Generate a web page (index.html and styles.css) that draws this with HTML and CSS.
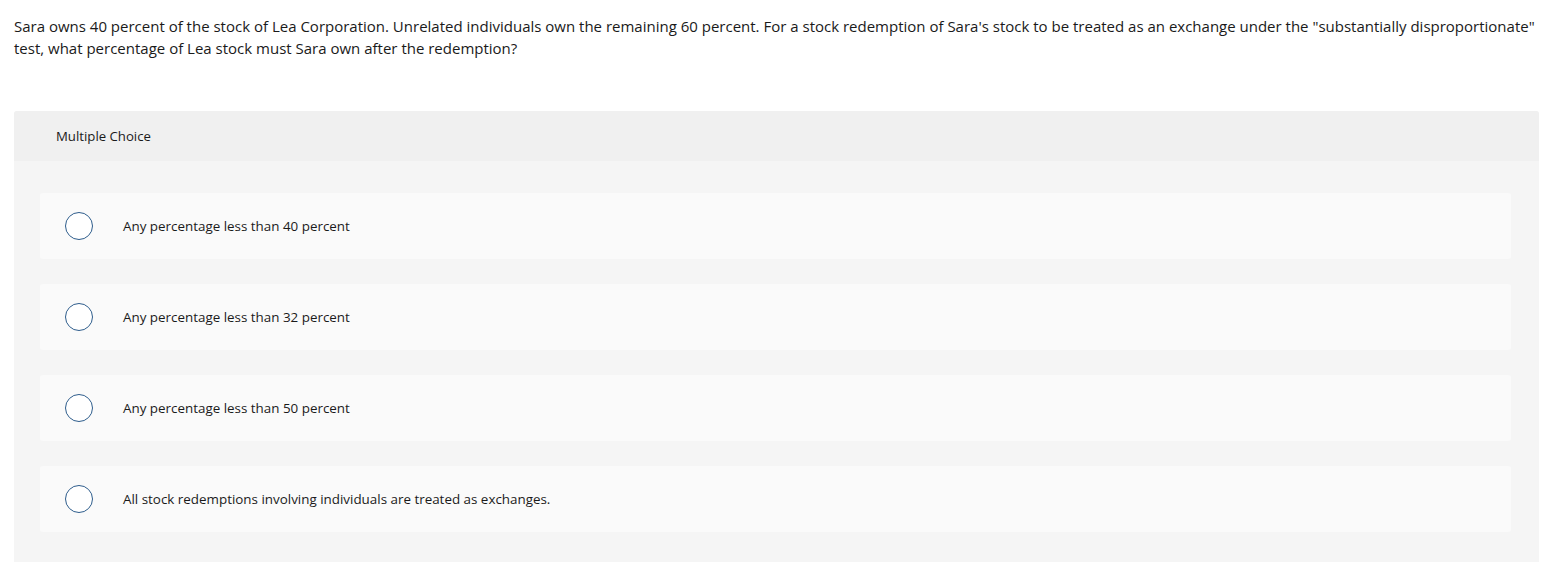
FILE: index.html
```html
<!DOCTYPE html>
<html>
<head>
<meta charset="utf-8">
<link rel="stylesheet" href="styles.css">
</head>
<body>
<div class="page">
  <p class="question">Sara owns 40 percent of the stock of Lea Corporation. Unrelated individuals own the remaining 60 percent. For a stock redemption of Sara's stock to be treated as an exchange under the "substantially disproportionate" test, what percentage of Lea stock must Sara own after the redemption?</p>
  <div class="panel">
    <div class="panel-head">Multiple Choice</div>
    <div class="options">
      <div class="option"><span class="radio"></span><span class="label">Any percentage less than 40 percent</span></div>
      <div class="option"><span class="radio"></span><span class="label">Any percentage less than 32 percent</span></div>
      <div class="option"><span class="radio"></span><span class="label">Any percentage less than 50 percent</span></div>
      <div class="option"><span class="radio"></span><span class="label">All stock redemptions involving individuals are treated as exchanges.</span></div>
    </div>
  </div>
</div>
</body>
</html>
```
FILE: styles.css
```css
html, body {
  margin: 0;
  padding: 0;
  background: #ffffff;
}
body {
  font-family: "Open Sans", "Liberation Sans", sans-serif;
  color: #1a1a1a;
}
.page {
  padding: 15px 15px 0 14px;
}
.question {
  margin: 0;
  font-size: 15px;
  line-height: 22px;
  color: #1a1a1a;
}
.panel {
  margin-top: 52px;
  background: #f5f5f5;
  border-radius: 3px 3px 0 0;
}
.panel-head {
  height: 50px;
  background: #f0f0f0;
  border-radius: 3px 3px 0 0;
  padding-left: 42px;
  display: flex;
  align-items: center;
  font-size: 13.2px;
  color: #1a1a1a;
}
.options {
  padding: 32px 28px 30px 26px;
  display: flex;
  flex-direction: column;
  gap: 25px;
}
.option {
  height: 66px;
  background: #fafafa;
  border-radius: 3px;
  display: flex;
  align-items: center;
  padding-left: 25px;
}
.radio {
  box-sizing: border-box;
  width: 28px;
  height: 28px;
  border: 1.6px solid #2e5d8c;
  border-radius: 50%;
  background: #fff;
  flex: none;
}
.label {
  margin-left: 30px;
  font-size: 13.4px;
  color: #1a1a1a;
}
```
